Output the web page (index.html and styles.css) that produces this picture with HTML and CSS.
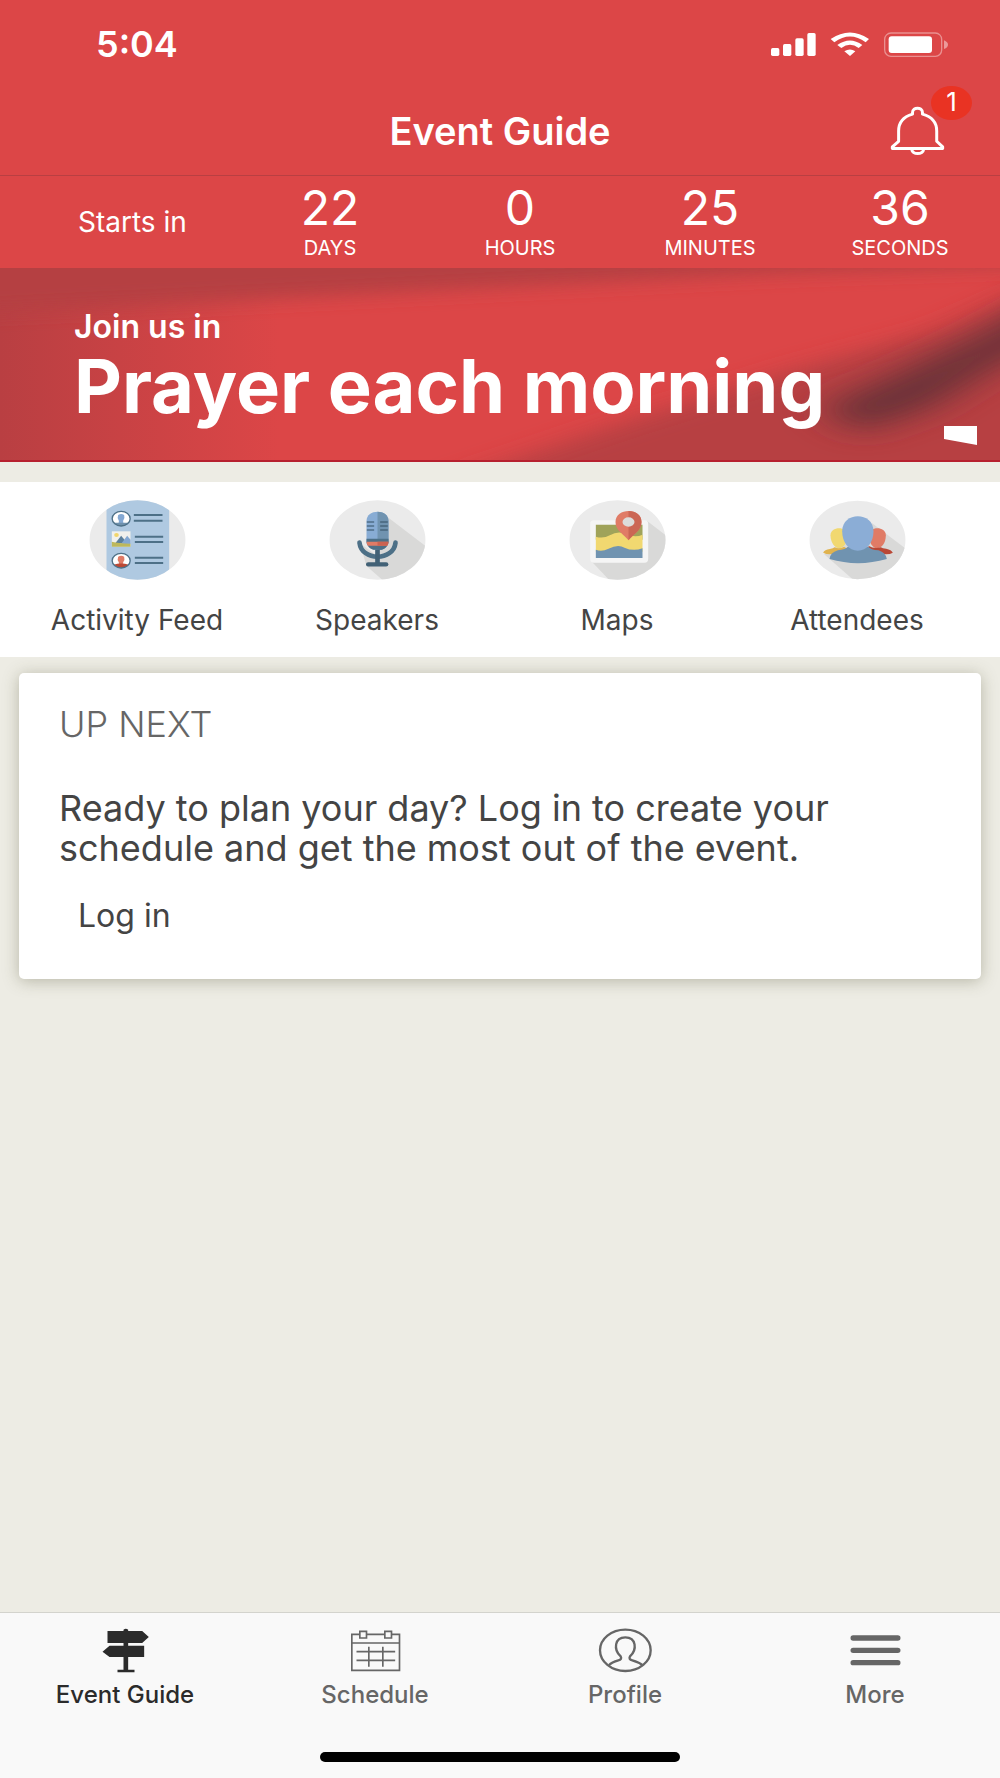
FILE: index.html
```html
<!doctype html>
<html lang="en">
<head>
    <meta charset="utf-8">
    <meta name="viewport" content="width=device-width, initial-scale=1">
    <title>Event Guide</title>
    <link rel="stylesheet" href="styles.css">
</head>
<body>

<header class="top">
    <div class="status">
        <span class="clock">5:04</span>
        <svg class="status-icons" viewBox="810 96 534 75" aria-hidden="true">
            <g fill="#fff">
                <rect x="813" y="144" width="25" height="24" rx="5"/>
                <rect x="849" y="132" width="25" height="36" rx="5"/>
                <rect x="886" y="115" width="25" height="53" rx="5"/>
                <rect x="922" y="99" width="25" height="69" rx="5"/>
                <path d="M992 117Q1050 78 1107 117L1097 127Q1050 92 1003 127Z"/>
                <path d="M1012 135Q1050 108 1087 135L1076 144Q1050 125 1024 144Z"/>
                <path d="M1033 154Q1050 143 1066 154L1050 168Z"/>
                <rect x="1166" y="109" width="130" height="50" rx="9"/>
            </g>
            <rect x="1154" y="99" width="171" height="70" rx="19" fill="none" stroke="#fff" stroke-opacity=".4" stroke-width="4"/>
            <path d="M1332 121Q1344 126 1344 134T1332 147Z" fill="#fff" fill-opacity=".45"/>
        </svg>
    </div>
    <div class="title-bar">
        <h1>Event Guide</h1>
        <button type="button" class="bell" aria-label="Notifications">
            <svg viewBox="1170 318 166 150" fill="none" stroke="#fff" stroke-width="9" stroke-linejoin="round">
                <path d="M1238 342V337C1238 320 1268 320 1268 337V342C1297 350 1311 368 1311 393V424L1329 441V446H1177V441L1196 424V393C1196 368 1210 350 1238 342Z"/>
                <path d="M1235 447C1237 466 1270 466 1272 447"/>
            </svg>
            <span class="badge">1</span>
        </button>
    </div>
    <div class="countdown">
        <span class="starts">Starts in</span>
        <div class="unit"><strong>22</strong><span>DAYS</span></div>
        <div class="unit"><strong>0</strong><span>HOURS</span></div>
        <div class="unit"><strong>25</strong><span>MINUTES</span></div>
        <div class="unit"><strong>36</strong><span>SECONDS</span></div>
    </div>
</header>

<main>
    <section class="banner">
        <!-- folded cloth behind the text -->
        <svg class="banner-art" viewBox="0 0 1000 194" preserveAspectRatio="none" aria-hidden="true">
            <defs>
                <filter id="soft" x="-20%" y="-50%" width="140%" height="200%"><feGaussianBlur stdDeviation="20 9"/></filter>
                <filter id="softer" x="-40%" y="-60%" width="180%" height="220%"><feGaussianBlur stdDeviation="22 13"/></filter>
                <linearGradient id="side">
                    <stop offset="0" stop-color="#b93f42"/>
                    <stop offset=".28" stop-color="#b93f42" stop-opacity="0"/>
                </linearGradient>
            </defs>
            <rect width="1000" height="194" fill="#dc4647"/>
            <rect width="1000" height="194" fill="url(#side)"/>
            <path d="M-60 -40H1060V-4L780 5L480 20L240 32L-60 46Z" fill="#b53f42" filter="url(#soft)"/>
            <path d="M460 210L620 156L800 100L940 62L1060 10V250H440Z" fill="#b73f42" filter="url(#soft)"/>
            <path d="M1080 10L980 66L900 104L820 140L860 164L930 140L1000 96L1080 60Z" fill="#6b3337" filter="url(#softer)"/>
            <rect y="192" width="1000" height="2" fill="#b7202f"/>
            <path d="M944 158H977V177L944 171Z" fill="#fff"/>
        </svg>
        <p class="join">Join us in</p>
        <h2>Prayer each morning</h2>
    </section>

    <nav class="shortcuts">
        <a href="#feed">
            <svg viewBox="56 31 290 240" aria-hidden="true">
                <clipPath id="c1"><ellipse cx="201" cy="151" rx="144" ry="119"/></clipPath>
                <g clip-path="url(#c1)">
                    <path d="M56 31h290v240H56z" fill="#ebebeb"/>
                    <path d="M108 31h188v240H108z" fill="#afc9e1"/>
                </g>
                <g fill="none" stroke="#4d7087" stroke-width="6">
                    <path d="M190 76h86M190 93h86M193 141h85M193 157h85M193 204h85M193 220h85"/>
                </g>
                <ellipse cx="152" cy="87" rx="27" ry="22" fill="#fff"/>
                <path d="M143 76q9-6 18 0q3 10-3 17v6l16 3q-20 14-44 0l15-3v-6q-6-8-2-17z" fill="#83a8d3"/>
                <path d="M129 99h46q-20 18-46 0z" fill="#6f91ad"/>
                <ellipse cx="152" cy="87" rx="27" ry="22" fill="none" stroke="#4d7087" stroke-width="4"/>
                <path d="M124 125h56v46h-56z" fill="#f1f1ed"/>
                <ellipse cx="138" cy="136" rx="7" ry="6" fill="#f1d66b"/>
                <path d="M135 160l17-22l20 24z" fill="#5c809c"/>
                <path d="M152 162l18-24l10 12v13z" fill="#83a8d3"/>
                <path d="M124 156q18 5 56 6v9h-56z" fill="#bdb85c"/>
                <ellipse cx="152" cy="213" rx="27" ry="22" fill="#fff"/>
                <path d="M143 201q9-6 18 0q3 10-3 17v6l16 3q-20 14-44 0l15-3v-6q-6-8-2-17z" fill="#e07b66"/>
                <path d="M129 225q23-7 46 0q-20 18-46 0z" fill="#bc4a36"/>
                <ellipse cx="152" cy="213" rx="27" ry="22" fill="none" stroke="#4d7087" stroke-width="4"/>
            </svg>
            <span>Activity Feed</span>
        </a>
        <a href="#speakers">
            <svg viewBox="58 31 290 240" aria-hidden="true">
                <clipPath id="c2"><ellipse cx="203" cy="151" rx="144" ry="119"/></clipPath>
                <g clip-path="url(#c2)">
                    <path d="M58 31h290v240H58z" fill="#ebebeb"/>
                    <path d="M228 78L348 170V271H218L170 229L150 160L203 200Z" fill="#d9d9d8"/>
                </g>
                <path d="M170 94C170 57 236 57 236 94V155C236 190 170 190 170 155Z" fill="#88acd4"/>
                <path d="M203 66C224 66 236 78 236 94V155C236 172 220 182 203 182Z" fill="#7093b0"/>
                <path d="M170 147h66v9q-2 17-20 24h-26q-18-7-20-24z" fill="#4d7087"/>
                <path d="M170 156h66q0 7-4 12h-58q-4-5-4-12z" fill="#e07b66"/>
                <path d="M203 156h33q0 7-4 12h-29z" fill="#cb6352"/>
                <path d="M171 97h22M171 109h22M171 121h22M211 97h23M211 109h23M211 121h23" stroke="#334f62" stroke-width="3"/>
                <path d="M149 159C155 215 251 215 257 159" fill="none" stroke="#4d7087" stroke-width="14" stroke-linecap="round"/>
                <path d="M196 180h14v40h-14z" fill="#426176"/>
                <path d="M175 224h54" stroke="#426176" stroke-width="13" stroke-linecap="round"/>
            </svg>
            <span>Speakers</span>
        </a>
        <a href="#maps">
            <svg viewBox="56 31 290 240" aria-hidden="true">
                <clipPath id="c3"><ellipse cx="201" cy="151" rx="144" ry="119"/></clipPath>
                <g clip-path="url(#c3)">
                    <path d="M56 31h290v240H56z" fill="#ebebeb"/>
                    <path d="M290 94L350 140V271H176L122 214Z" fill="#d9d9d8"/>
                </g>
                <rect x="119" y="92" width="174" height="127" rx="11" fill="#f5f5f5"/>
                <path d="M136 105h140v45H136z" fill="#a0a35a"/>
                <path d="M136 141Q158 148 178 137Q203 122 226 133Q254 145 276 135V186H136Z" fill="#f1d870"/>
                <path d="M136 180Q154 187 174 177Q203 162 222 174Q248 186 276 176V205H136Z" fill="#7093b0"/>
                <path d="M234 152C221 134 195 124 195 97C195 53 273 53 273 97C273 124 247 134 234 152Z" fill="#e07b66"/>
                <path d="M234 64C257 64 273 76 273 97C273 124 247 134 234 152Z" fill="#cb6654"/>
                <ellipse cx="234" cy="97" rx="18" ry="14" fill="#dcdcda"/>
            </svg>
            <span>Maps</span>
        </a>
        <a href="#attendees">
            <svg viewBox="59 32 290 240" aria-hidden="true">
                <clipPath id="c4"><ellipse cx="204" cy="152" rx="144" ry="118"/></clipPath>
                <g clip-path="url(#c4)">
                    <path d="M59 32h290v240H59z" fill="#ebebeb"/>
                    <path d="M248 102L349 178V272H192L104 195Z" fill="#d9d9d8"/>
                </g>
                <path d="M123 138C123 110 174 110 174 138C174 163 161 176 149 177C136 177 123 160 123 138Z" fill="#f1d870"/>
                <path d="M135 174Q149 180 164 172L184 186L130 194Q112 196 101 190Q105 181 121 179Q132 178 135 174Z" fill="#e0b34f"/>
                <path d="M238 138C238 110 289 110 289 138C289 163 276 176 262 177C250 177 238 160 238 138Z" fill="#e07b66"/>
                <path d="M238 170Q254 180 274 174Q279 178 290 178Q306 181 310 190Q300 196 280 194L230 186Z" fill="#b94836"/>
                <path d="M120 209Q122 190 145 183Q168 180 175 172H236Q244 181 267 183Q289 190 292 209Q205 234 120 209Z" fill="#7093b0"/>
                <path d="M158 126C158 66 252 66 252 126C252 160 232 184 205 184C178 184 158 160 158 126Z" fill="#8badd6"/>
            </svg>
            <span>Attendees</span>
        </a>
    </nav>

    <section class="card">
        <h2>UP NEXT</h2>
        <p>Ready to plan your day? Log in to create your schedule and get the most out of the event.</p>
        <a href="#login">Log in</a>
    </section>
</main>

<footer class="bottom">
    <nav class="tabs">
        <a href="#guide" class="active">
            <svg viewBox="300 84 150 135" fill="currentColor" aria-hidden="true">
                <path d="M369 89q7-6 14 0v4h42l20 18l-20 18h-42v8h48v34h-48v38h19v8h-51v-8h18v-38h-42l-21-16l21-18h42v-8h-48v-36h48z"/>
            </svg>
            <span>Event Guide</span>
        </a>
        <a href="#schedule">
            <svg viewBox="1049 84 150 135" fill="none" stroke="currentColor" stroke-width="5" aria-hidden="true">
                <path d="M1076 103H1053V211H1196V103H1173M1098 103H1151M1053 129H1196"/>
                <path d="M1077 94h20v20h-20zM1152 94h20v20h-20z"/>
                <path d="M1067 155H1183M1067 181H1183M1104 140V200M1146 140V200"/>
            </svg>
            <span>Schedule</span>
        </a>
        <a href="#profile">
            <svg viewBox="291 84 165 135" fill="none" stroke="currentColor" stroke-width="7" aria-hidden="true">
                <ellipse cx="373" cy="151" rx="76" ry="62"/>
                <path d="M324 195Q332 187 352 181Q364 178 359 169C337 149 340 112 373 112C406 112 409 149 387 169Q382 178 394 181Q414 187 424 195"/>
            </svg>
            <span>Profile</span>
        </a>
        <a href="#more">
            <svg viewBox="1049 84 150 135" stroke="currentColor" stroke-width="16" stroke-linecap="round" aria-hidden="true">
                <path d="M1057 114H1191M1057 151H1191M1057 188H1191"/>
            </svg>
            <span>More</span>
        </a>
    </nav>
    <div class="home-bar"></div>
</footer>

</body>
</html>
```
FILE: styles.css
```css
* {
    box-sizing: border-box;
}

body {
    margin: 0;
    min-height: 100vh;
    display: flex;
    flex-direction: column;
    background: #edece4;
    color: #444;
    font-family: Inter, "Liberation Sans", sans-serif;
}

h1, h2, p {
    margin: 0;
}

a {
    color: inherit;
    text-decoration: none;
}

svg {
    display: block;
}

main {
    flex: 1;
}

/* header */
.top {
    background: #dc4647;
    color: #fff;
}

.status {
    display: flex;
    justify-content: space-between;
    align-items: center;
    height: 88px;
    padding: 0 52px 0 96px;
}

.clock {
    font-size: 36px;
    font-weight: 600;
}

.status-icons {
    width: 178px;
    height: 25px;
}

.title-bar {
    display: grid;
    grid-template-columns: 1fr auto 1fr;
    align-items: center;
    height: 88px;
    padding: 0 55px 2px;
    border-bottom: 1px solid #b93f42;
}

.title-bar h1 {
    grid-column: 2;
    font-size: 38px;
    font-weight: 600;
    line-height: 44px;
}

.bell {
    position: relative;
    justify-self: end;
    padding: 0;
    border: 0;
    background: none;
    color: #fff;
    font-family: inherit;
}

.bell svg {
    width: 55px;
    height: 50px;
}

.badge {
    position: absolute;
    left: 41px;
    top: -20px;
    width: 41px;
    height: 34px;
    border-radius: 50%;
    background: #e93323;
    font-size: 26px;
    line-height: 32px;
}

.countdown {
    display: grid;
    grid-template-columns: 235px repeat(4, 1fr);
    height: 92px;
    padding: 4px 5px 0 0;
}

.starts {
    padding: 26px 0 0 78px;
    font-size: 28px;
    line-height: 32px;
}

.unit {
    text-align: center;
}

.unit strong {
    display: block;
    font-size: 48px;
    font-weight: 400;
    line-height: 56px;
}

.unit span {
    display: block;
    font-size: 20px;
    line-height: 24px;
}

/* banner */
.banner {
    position: relative;
    padding: 40px 74px 36px;
    color: #fff;
}

.banner-art {
    position: absolute;
    inset: 0;
    width: 100%;
    height: 100%;
}

.banner p, .banner h2 {
    position: relative;
}

.join {
    font-size: 32px;
    font-weight: 600;
    line-height: 38px;
}

.banner h2 {
    font-size: 74px;
    font-weight: 700;
    line-height: 80px;
}

/* round icons */
.shortcuts {
    display: grid;
    grid-template-columns: repeat(4, 1fr);
    margin-top: 20px;
    padding: 18px 23px 21px 17px;
    background: #fff;
}

.shortcuts a {
    display: flex;
    flex-direction: column;
    align-items: center;
    gap: 24px;
    font-size: 28px;
    line-height: 32px;
}

.shortcuts svg {
    width: 97px;
    height: 80px;
}

.card {
    margin: 16px 19px;
    padding: 30px 40px 45px;
    border-radius: 5px;
    background: #fff;
    box-shadow: 0 2px 16px rgba(80, 80, 50, .35);
}

.card h2 {
    margin-bottom: 43px;
    color: #666;
    font-size: 36px;
    font-weight: 300;
    line-height: 42px;
}

.card p {
    max-width: 800px;
    font-size: 36px;
    line-height: 40px;
}

.card a {
    display: inline-block;
    margin: 30px 0 0 19px;
    font-size: 32px;
    line-height: 36px;
}

/* tab bar */
.bottom {
    padding: 15px 0 16px;
    border-top: 1px solid #d3d3cd;
    background: #f9f9f9;
}

.tabs {
    display: grid;
    grid-template-columns: repeat(4, 1fr);
    color: #666;
}

.tabs a {
    display: flex;
    flex-direction: column;
    align-items: center;
    gap: 8px;
    font-size: 24px;
    font-weight: 500;
    line-height: 28px;
}

.tabs .active {
    color: #2b2b2b;
}

.tabs svg {
    width: 55px;
    height: 45px;
}

.home-bar {
    width: 36%;
    height: 10px;
    margin: 43px auto 0;
    border-radius: 5px;
    background: #000;
}
```
